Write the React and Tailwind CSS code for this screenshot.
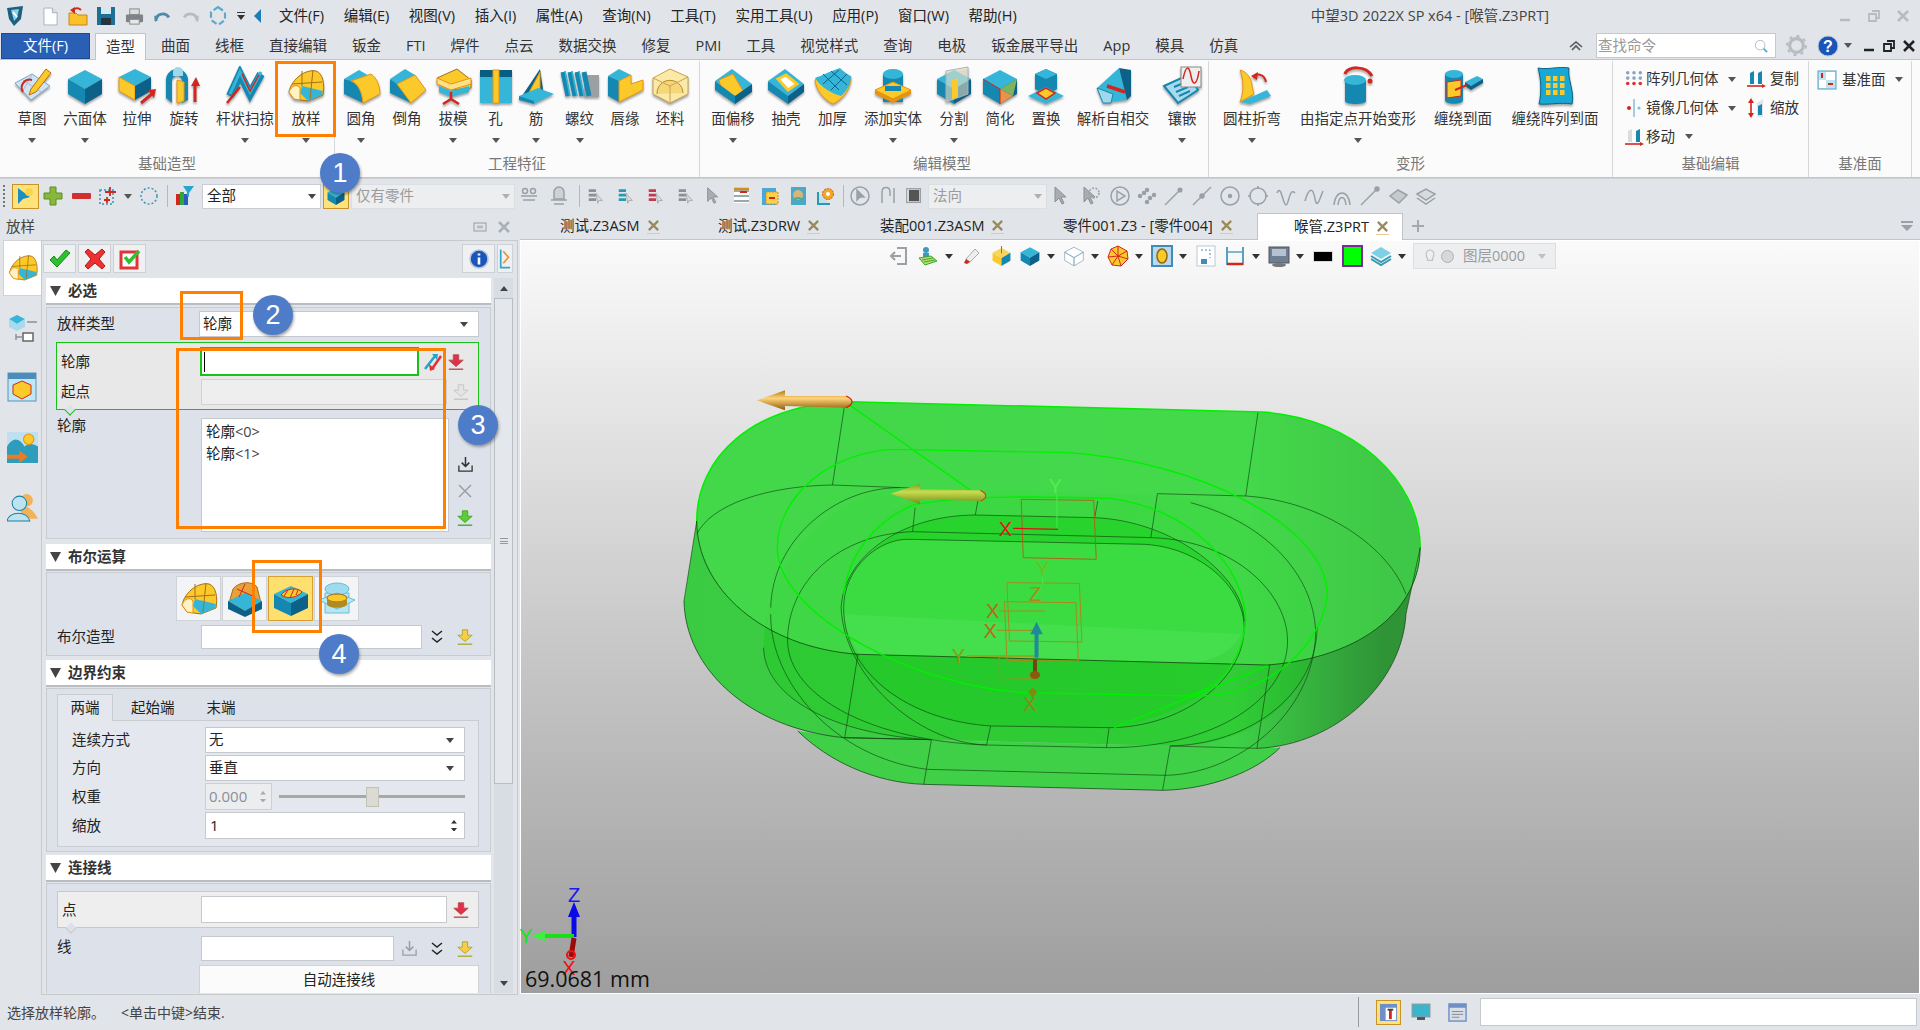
import React from 'react';

const T = '#35b6d8', L = '#1488b0', R = '#0b6187', Y = '#fcc92b', O = '#e8930f', RD = '#d0281e';

const Ico = ({ s = 40, c = '', children }) => (
  <svg viewBox="0 0 40 40" width={s} height={s} className={c}>{children}</svg>
);

const cube = (
  <>
    <path d="M20 4 37 13 20 23 3 13Z" fill={T} />
    <path d="M3 13 20 23V38L3 28Z" fill={L} />
    <path d="M37 13 20 23V38L37 28Z" fill={R} />
  </>
);

// ribbon pictures, all on a 40 x 40 box
const pics = {
  sketch: (
    <>
      <path d="M3 17 20 8 38 20 19 34Z" fill="#cfe3f2" stroke="#7aa8c8" />
      <path d="M11 14 29 26M20 9 10 26" stroke="#9cc0da" />
      <path d="M11 26a8 8 0 0 1 9-12" stroke={RD} strokeWidth="2" fill="none" />
      <path d="M19 23 34 3 39 7 24 26 17 29Z" fill={Y} stroke="#b56d10" />
    </>
  ),
  hex: cube,
  extrude: (
    <>
      <path d="M18 3 34 11 18 20 2 11Z" fill={T} />
      <path d="M2 11 18 20V34L2 25Z" fill={Y} stroke={O} />
      <path d="M34 11 18 20V34L34 25Z" fill={R} />
      <path d="M24 37 36 27" stroke={RD} strokeWidth="3" />
      <path d="M31 24 39 23 37 32Z" fill={RD} />
    </>
  ),
  revolve: (
    <>
      <path d="M2 32V14a11 11 0 0 1 22 0V34l-6 3V15a5 5 0 0 0-10 0V37Z" fill={L} />
      <path d="M9 6a5 5 0 0 1 10 0v4H9Z" fill="#9fd8ea" />
      <path d="M13 14 20 16V35L13 37Z" fill={Y} stroke={O} />
      <path d="M31 36V18" stroke={RD} strokeWidth="3" />
      <path d="M27 20 32 11 36 20Z" fill={RD} />
    </>
  ),
  sweep: (
    <>
      <path d="M5 30 15 8 25 28 36 8" stroke={L} strokeWidth="8" fill="none" />
      <path d="M5 28 15 6 25 26 36 6" stroke={T} strokeWidth="3" fill="none" />
      <path d="M2 37 15 21" stroke={RD} strokeWidth="2.5" />
      <path d="M17 8 25 25 34 9" stroke={RD} strokeWidth="1.5" fill="none" />
    </>
  ),
  loft: (
    <>
      <path d="M3 26C6 12 20 3 30 5c7 2 9 14 7 24L22 35 8 33Z" fill={Y} stroke="#a66f14" />
      <path d="M16 20 37 25 36 29 22 35 14 27Z" fill={T} />
      <path d="M16 5 16 20M27 4 24 33M6 18 36 16" stroke="#a66f14" fill="none" />
      <path d="M3 26C6 19 11 18 14 22L14 34 8 33Z" fill="#fff3c4" stroke={O} />
    </>
  ),
  fillet: (
    <>
      <path d="M18 4 30 11 10 15 3 13Z" fill={T} />
      <path d="M3 13 10 15C18 18 21 27 22 37L3 28Z" fill={L} />
      <path d="M10 15 30 8C36 12 39 20 39 28L22 37C21 27 18 18 10 15Z" fill={Y} stroke={O} />
    </>
  ),
  chamfer: (
    <>
      <path d="M18 3 28 9 10 18 3 13Z" fill={T} />
      <path d="M3 13 10 18 24 37 3 27Z" fill={L} />
      <path d="M10 18 28 9 39 24 24 37Z" fill={Y} stroke={O} />
    </>
  ),
  draft: (
    <>
      <path d="M4 12 24 3 38 14 38 22 18 24Z" fill={Y} stroke="#a66f14" />
      <path d="M4 12 18 18 38 12 38 18 18 24 4 18Z" fill="#fde187" stroke={O} />
      <path d="M6 20 18 25 36 20V26L18 31 6 26Z" fill={T} />
      <path d="M18 26V33L10 38M18 33 26 38" stroke={RD} strokeWidth="2.5" fill="none" />
    </>
  ),
  hole: (
    <>
      <rect x="4" y="4" width="32" height="33" fill={T} />
      <rect x="4" y="4" width="32" height="7" fill="#0a5d82" />
      <rect x="17" y="4" width="6" height="33" fill={Y} stroke={O} />
    </>
  ),
  rib: (
    <>
      <path d="M6 30 24 3 28 30Z" fill={R} />
      <path d="M10 32 24 6V30Z" fill={Y} stroke={O} />
      <path d="M3 30 22 22 38 28 18 38Z" fill={T} />
      <path d="M3 30V34L18 38V35Z" fill={L} />
    </>
  ),
  thread: (
    <>
      <rect x="24" y="9" width="15" height="22" fill="#9aa0a3" />
      <path d="M3 6 8 30M10 6 15 30M17 6 22 30M24 6 29 30" stroke={L} strokeWidth="5" />
      <path d="M5 5 10 30M12 5 17 30M19 5 24 30" stroke={T} strokeWidth="1.5" />
    </>
  ),
  lip: (
    <>
      <path d="M14 3 26 9 14 15 3 10Z" fill={T} />
      <path d="M3 10 14 15V36L3 30Z" fill={L} />
      <path d="M14 15 26 9V18L38 14V24L14 36Z" fill={Y} stroke={O} />
    </>
  ),
  stock: (
    <>
      <path d="M20 3 38 11V28L20 37 3 28V12Z" fill="#fbe9a8" stroke="#c9a24a" />
      <path d="M7 28C7 10 32 10 33 27" stroke="#b78a2c" fill="#f5d77a" />
      <path d="M3 12 20 20 38 11M20 20V37" stroke="#c9a24a" fill="none" />
    </>
  ),
  offset: (
    <>
      <path d="M19 3 39 18 22 30 2 15Z" fill={T} />
      <path d="M6 14 20 8 33 30 10 30Z" fill={Y} stroke={O} />
      <path d="M2 15 22 30V38L2 24Z" fill={L} />
      <path d="M39 18 22 30V38L39 26Z" fill={R} />
    </>
  ),
  shell: (
    <>
      <path d="M19 3 38 18 22 30 2 15Z" fill={T} />
      <path d="M12 13 20 9 31 18 22 24Z" fill="#fff" stroke={Y} strokeWidth="3" />
      <path d="M2 15 22 30V38L2 24Z" fill={L} />
      <path d="M38 18 22 30V38L38 26Z" fill={R} />
    </>
  ),
  thick: (
    <>
      <path d="M2 14C8 12 20 6 27 3c3 3 8 7 11 8 0 12-8 22-18 27C10 33 3 24 2 14Z" fill={Y} stroke={O} />
      <path d="M2 12C8 10 20 4 27 2c3 3 8 7 11 8 0 8-4 15-10 20-8-2-20-8-26-18Z" fill={T} />
      <path d="M10 8 26 24M18 5 34 19M10 18 26 4M18 24 34 8" stroke={R} fill="none" />
    </>
  ),
  add: (
    <>
      <path d="M10 8V36H30V8Z" fill={L} />
      <ellipse cx="20" cy="8" rx="10" ry="5" fill={T} />
      <path d="M2 24 20 16 38 24 20 33Z" fill={Y} stroke={O} />
      <path d="M2 24V28L20 37V33ZM38 24V28L20 37V33Z" fill={O} />
      <rect x="12" y="20" width="16" height="5" fill={L} />
    </>
  ),
  split: (
    <>
      {cube}
      <path d="M12 5 34 1V28L12 36Z" fill="#f2e6c6" fillOpacity=".55" stroke="#a9b2b8" />
      <path d="M18 14 24 12V31L18 34Z" fill={Y} />
    </>
  ),
  simplify: (
    <>
      {cube}
      <path d="M20 23 37 13 33 30Z" fill="#7db35f" />
      <path d="M20 23V38L33 30Z" fill="#e8934a" />
      <path d="M3 13 20 23V38" stroke={RD} fill="none" />
    </>
  ),
  replace: (
    <>
      <path d="M9 8 20 3 31 8V23L20 29 9 23Z" fill={L} />
      <path d="M9 8 20 13 31 8 20 3Z" fill={T} />
      <path d="M2 30 20 21 38 30 20 38Z" fill={T} />
      <path d="M11 27 20 22 29 27 20 33Z" fill={Y} stroke={RD} strokeWidth="1.5" />
    </>
  ),
  intersect: (
    <>
      <path d="M4 22 26 2 34 34 10 37Z" fill={T} />
      <path d="M26 2 38 4V30L34 34Z" fill={R} />
      <path d="M4 22 20 28 18 37 10 37Z" fill="#9ed8ea" stroke={L} />
      <path d="M14 20 32 26" stroke={RD} strokeWidth="3.5" />
    </>
  ),
  inlay: (
    <>
      <path d="M2 20 26 9 36 24 16 37Z" fill="#a9d9ec" stroke={L} strokeWidth="2" />
      <path d="M12 21 24 16M14 26 26 21M17 30 28 25" stroke={L} strokeWidth="2" />
      <rect x="19" y="1" width="20" height="20" fill="#eee" stroke="#888" />
      <path d="M21 13c3-14 6-14 8-3s6 9 8-5" stroke={RD} strokeWidth="1.5" fill="none" />
    </>
  ),
  bend: (
    <>
      <path d="M8 36 35 24 39 30 18 38Z" fill={T} />
      <path d="M8 4c8 2 12 10 12 16l2 8-14 8c4-10 4-22 0-32Z" fill={Y} stroke={O} />
      <path d="M22 12c2-5 10-5 12 4" stroke={RD} strokeWidth="2" fill="none" />
      <path d="M19 10 26 6 25 14Z" fill={RD} />
    </>
  ),
  deform: (
    <>
      <path d="M7 14V35C7 39 28 39 28 35V14Z" fill={L} />
      <ellipse cx="17" cy="14" rx="11" ry="5" fill={T} />
      <path d="M7 8C9 0 28-1 34 10" stroke={RD} strokeWidth="3" fill="none" />
      <circle cx="32" cy="15" r="2.5" fill={RD} />
    </>
  ),
  wrap: (
    <>
      <path d="M2 8V34C2 39 20 39 20 34V8Z" fill={L} />
      <ellipse cx="11" cy="8" rx="9" ry="4" fill={T} />
      <path d="M4 16 18 14V30L4 32Z" fill={Y} stroke={RD} />
      <path d="M22 16 34 10 40 13 28 20Z" fill={T} />
      <path d="M22 16V20L28 24V20ZM40 13V17L28 24V20Z" fill={R} />
      <path d="M12 24 24 19" stroke={RD} strokeWidth="2" />
    </>
  ),
  wrapArr: (
    <>
      <path d="M3 2C14 4 24 0 34 2c-2 10 6 24 3 36-12-2-22 1-33 0C7 26 6 12 3 2Z" fill="#18a8d6" stroke={R} />
      {[10, 17, 24].map((y) => [11, 18, 25].map((x) => <rect key={x + '-' + y} x={x} y={y} width="4.5" height="5" fill={Y} />))}
    </>
  ),
  boolAdd: (
    <>
      <path d="M8 10C14 2 28 2 32 8L36 24 20 32 4 24Z" fill="#e9a03a" stroke="#a66f14" />
      <path d="M3 22 20 14 37 22 20 32Z" fill={T} />
      <path d="M3 22V30L20 38V32ZM37 22V30L20 38V32Z" fill={R} />
      <path d="M12 10 30 18M20 5 14 18" stroke={RD} fill="none" />
    </>
  ),
  boolSub: (
    <>
      <path d="M3 15 20 7 37 15 20 24Z" fill={T} />
      <path d="M3 15 20 24V37L3 29Z" fill={L} />
      <path d="M37 15 20 24V37L37 29Z" fill={R} />
      <path d="M10 16C15 9 27 8 31 13 27 18 17 21 10 16Z" fill={Y} stroke={RD} />
      <path d="M13 17 17 11M19 19 23 10M25 16 27 11" stroke={RD} fill="none" />
    </>
  ),
  boolCross: (
    <>
      <path d="M8 14V34H32V14Z" fill="#b7e6f2" stroke="#69bcd4" />
      <ellipse cx="20" cy="10" rx="12" ry="6" fill="#9ddcee" stroke="#69bcd4" />
      <path d="M2 21 20 14 38 21 20 30Z" fill="#bde8f3" stroke="#69bcd4" />
      <ellipse cx="20" cy="19" rx="10" ry="4" fill={Y} stroke="#9a6a10" />
      <path d="M10 19V25C10 30 30 30 30 25V19C30 24 10 24 10 19Z" fill="#b08c20" />
    </>
  ),
};

const RArrow = ({ c = '#555', w = 8 }) => (
  <svg viewBox="0 0 8 5" width={w} height={(w * 5) / 8} className="shrink-0"><path d="M0 0H8L4 5Z" fill={c} /></svg>
);

const items1 = [
  ['w-[48px]', '草图', 'sketch', 1], ['w-[58px]', '六面体', 'hex', 1], ['w-[46px]', '拉伸', 'extrude', 0],
  ['w-[48px]', '旋转', 'revolve', 0], ['w-[74px]', '杆状扫掠', 'sweep', 1], ['w-[48px]', '放样', 'loft', 1],
];
const items2 = [
  ['w-[46px]', '圆角', 'fillet', 1], ['w-[46px]', '倒角', 'chamfer', 0], ['w-[46px]', '拔模', 'draft', 1],
  ['w-[39px]', '孔', 'hole', 1], ['w-[42px]', '筋', 'rib', 1], ['w-[45px]', '螺纹', 'thread', 1],
  ['w-[46px]', '唇缘', 'lip', 0], ['w-[44px]', '坯料', 'stock', 0],
];
const items3 = [
  ['w-[58px]', '面偏移', 'offset', 1], ['w-[48px]', '抽壳', 'shell', 0], ['w-[45px]', '加厚', 'thick', 0],
  ['w-[76px]', '添加实体', 'add', 1], ['w-[46px]', '分割', 'split', 1], ['w-[46px]', '简化', 'simplify', 0],
  ['w-[46px]', '置换', 'replace', 0], ['w-[88px]', '解析自相交', 'intersect', 0], ['w-[50px]', '镶嵌', 'inlay', 1],
];
const items4 = [
  ['w-[74px]', '圆柱折弯', 'bend', 1], ['w-[138px]', '由指定点开始变形', 'deform', 1],
  ['w-[72px]', '缠绕到面', 'wrap', 0], ['w-[112px]', '缠绕阵列到面', 'wrapArr', 0],
];

const RibbonItem = ({ item }) => (
  <div className={`${item[0]} flex flex-col items-center shrink-0`}>
    <div className="h-[42px] flex items-center justify-center"><Ico c="drop-shadow-[0_2px_1px_rgba(0,0,0,0.35)]">{pics[item[2]]}</Ico></div>
    <div className="h-[23px] leading-[23px] whitespace-nowrap">{item[1]}</div>
    <div className="h-[20px] flex items-center justify-center">{item[3] ? <RArrow /> : null}</div>
  </div>
);

const RibbonGroup = ({ w, pl, title, items, children, capCls = '' }) => (
  <div className={`${w} h-[116px] shrink-0 border-r border-[#d5d8db] flex flex-col`}>
    <div className={`${pl} h-[90px] pt-[4px] flex`}>
      {items ? items.map((it) => <RibbonItem key={it[1]} item={it} />) : children}
    </div>
    <div className={`${capCls} flex-1 flex items-center justify-center text-[#777] text-[14.5px]`}>{title}</div>
  </div>
);

const ColorDots = () => (
  <svg viewBox="0 0 20 20" width="18" height="18">
    {[3, 9, 15].map((y) => [3, 10, 17].map((x) => <circle key={x + '' + y} cx={x} cy={y} r="2" fill={y === 15 ? '#d33' : '#88a6c4'} />))}
  </svg>
);

const Mini = ({ kind }) => {
  if (kind === 'copy' || kind === 'move') {
    return (
      <svg viewBox="0 0 20 20" width="20" height="20">
        <path d="M4 4 8 2V15H4Z" fill={kind === 'copy' ? L : '#d8dcdf'} />
        <path d="M12 4 16 2V15H12Z" fill={L} />
        <path d="M1 17H17" stroke={RD} strokeWidth="1.6" />
        <path d="M16 15 20 17 16 19Z" fill={RD} />
      </svg>
    );
  }
  if (kind === 'mirror') {
    return (
      <svg viewBox="0 0 20 20" width="20" height="20">
        <path d="M10 1V19" stroke="#7cc0d8" strokeWidth="1.5" />
        <circle cx="5" cy="10" r="2" fill={RD} />
        <circle cx="15" cy="10" r="1.6" fill="#7cc0d8" />
      </svg>
    );
  }
  if (kind === 'scale') {
    return (
      <svg viewBox="0 0 20 20" width="20" height="20">
        <path d="M5 2V18" stroke={RD} strokeWidth="1.6" />
        <path d="M2 5 5 0 8 5ZM2 15 5 20 8 15Z" fill={RD} />
        <path d="M11 5 17 1V19H11Z" fill="#e0e4e7" />
        <path d="M12 8 16 6V17H12Z" fill={L} />
      </svg>
    );
  }
  if (kind === 'datum') {
    return (
      <svg viewBox="0 0 20 20" width="20" height="20">
        <rect x="1" y="1" width="18" height="18" fill="#bfe3f0" stroke="#4fa3c4" />
        <rect x="9" y="2" width="9" height="8" fill="#fff" />
        <rect x="2" y="10" width="7" height="8" fill="#fff" />
        <path d="M5 3V8M11 14H16" stroke={RD} strokeWidth="2" />
      </svg>
    );
  }
  return <ColorDots />;
};

const Rows = () => (
  <div className="flex flex-col w-full pl-[8px] text-[14.5px]">
    <div className="flex h-[29px] items-center">
      <span className="w-[25px] flex justify-center"><Mini kind="dots" /></span>
      <span className="w-[73px] whitespace-nowrap">阵列几何体</span>
      <span className="w-[27px] pl-[9px]"><RArrow /></span>
      <span className="w-[24px]"><Mini kind="copy" /></span>
      <span className="whitespace-nowrap">复制</span>
    </div>
    <div className="flex h-[29px] items-center">
      <span className="w-[25px] flex justify-center"><Mini kind="mirror" /></span>
      <span className="w-[73px] whitespace-nowrap">镜像几何体</span>
      <span className="w-[27px] pl-[9px]"><RArrow /></span>
      <span className="w-[24px]"><Mini kind="scale" /></span>
      <span className="whitespace-nowrap">缩放</span>
    </div>
    <div className="flex h-[29px] items-center">
      <span className="w-[25px] flex justify-center"><Mini kind="move" /></span>
      <span className="w-[39px] whitespace-nowrap">移动</span>
      <RArrow />
    </div>
  </div>
);

const Win = ({ k, c = '#b8bcc0' }) => (
  <svg viewBox="0 0 14 14" width="14" height="14" className="shrink-0">
    {k === 'min' && <path d="M2 11H12" stroke={c} strokeWidth="2.5" />}
    {k === 'max' && <path d="M5 2H12V9H9M2 5H9V12H2Z" stroke={c} strokeWidth="1.8" fill="none" />}
    {k === 'x' && <path d="M2 2 12 12M12 2 2 12" stroke={c} strokeWidth="2.5" />}
  </svg>
);

const QuickIcons = () => (
  <div className="flex items-center pl-[1px] shrink-0">
    <span className="w-[28px] flex justify-center">
      <svg viewBox="0 0 20 22" width="20" height="22">
        <path d="M2 3 18 1 16 14 9 21 4 14Z" fill="#1c5f7e" />
        <path d="M6 5 14 4 12 13 9 16Z" fill="#8ad0e2" />
        <path d="M8 7 12 12" stroke="#fff" strokeWidth="2" />
      </svg>
    </span>
    <span className="w-[28px] flex justify-center ml-[7px]">
      <svg viewBox="0 0 16 20" width="15" height="19"><path d="M1 1H10L15 6V19H1Z" fill="#fff" stroke="#a8b0b8" /><path d="M10 1V6H15" fill="#dde" stroke="#a8b0b8" /></svg>
    </span>
    <span className="w-[28px] flex justify-center">
      <svg viewBox="0 0 20 20" width="20" height="20"><path d="M1 7H8L10 9H19V19H1Z" fill="#f9c12a" stroke="#c8861a" /><path d="M5 6C5 2 10 1 13 4" stroke={RD} strokeWidth="2" fill="none" /><path d="M2 4 7 1 7 8Z" fill={RD} /></svg>
    </span>
    <span className="w-[28px] flex justify-center">
      <svg viewBox="0 0 20 20" width="20" height="20"><rect x="1" y="1" width="18" height="18" fill="#1d6f95" /><rect x="5" y="1" width="10" height="7" fill="#d8e8f0" /><rect x="5" y="12" width="10" height="7" fill="#26353d" /></svg>
    </span>
    <span className="w-[28px] flex justify-center">
      <svg viewBox="0 0 20 20" width="19" height="19"><rect x="5" y="2" width="10" height="6" fill="#ddd" stroke="#888" /><rect x="1" y="8" width="18" height="8" rx="1" fill="#7d8388" /><rect x="5" y="13" width="10" height="5" fill="#e8e8e8" stroke="#888" /></svg>
    </span>
    <span className="w-[28px] flex justify-center">
      <svg viewBox="0 0 20 14" width="19" height="13"><path d="M3 12C2 5 12 1 17 8" stroke="#4d8cab" strokeWidth="3" fill="none" /><path d="M1 6 6 8 2 13Z" fill="#4d8cab" /></svg>
    </span>
    <span className="w-[28px] flex justify-center">
      <svg viewBox="0 0 20 14" width="19" height="13"><path d="M17 12C18 5 8 1 3 8" stroke="#b8bcc0" strokeWidth="3" fill="none" /><path d="M19 6 14 8 18 13Z" fill="#b8bcc0" /></svg>
    </span>
    <span className="w-[28px] flex justify-center">
      <svg viewBox="0 0 20 22" width="20" height="22"><path d="M10 2 17 7V15L10 20 3 15V7Z" fill="none" stroke="#5aaac8" strokeWidth="2.2" strokeDasharray="6 3" /></svg>
    </span>
    <span className="w-[12px] ml-[3px] flex flex-col items-center gap-[2px]"><span className="w-[8px] h-[1px] bg-[#333]" /><RArrow c="#333" /></span>
    <span className="w-[10px] ml-[7px] flex">
      <svg viewBox="0 0 8 14" width="8" height="14"><path d="M7 0V14L0 7Z" fill="#1a7db5" /></svg>
    </span>
  </div>
);

const menus = ['文件(F)', '编辑(E)', '视图(V)', '插入(I)', '属性(A)', '查询(N)', '工具(T)', '实用工具(U)', '应用(P)', '窗口(W)', '帮助(H)'];
const tabs = ['曲面', '线框', '直接编辑', '钣金', 'FTI', '焊件', '点云', '数据交换', '修复', 'PMI', '工具', '视觉样式', '查询', '电极', '钣金展平导出', 'App', '模具', '仿真'];

const Gray = ({ children, s = 22 }) => (
  <svg viewBox="0 0 22 22" width={s} height={s} className="shrink-0" fill="none" stroke="#9aa0a5" strokeWidth="1.5">{children}</svg>
);

const Cur = () => <path d="M4 2 4 17 8 13 11 19 13 18 10 12 15 12Z" fill="#a9adb1" stroke="#8b9094" strokeWidth="1" />;

const Toolbar = () => (
  <div className="h-[35px] flex items-center bg-[#e1e5e9] shrink-0 border-t border-[#cfd2d6] relative">
    <span className="w-[2px] h-[22px] ml-[3px] border-l-2 border-dotted border-[#777]" />
    <span className="w-[27px] h-[25px] ml-[7px] bg-[#ffe27a] border border-[#c9932c] flex items-center justify-center">
      <svg viewBox="0 0 20 20" width="20" height="20"><path d="M2 2V18L7 13 14 11Z" fill="#1a8fc0" /><circle cx="13" cy="6" r="4" fill="#fbd34a" /></svg>
    </span>
    <span className="w-[28px] ml-[0px] flex justify-center">
      <svg viewBox="0 0 20 20" width="20" height="20"><path d="M7 1H13V7H19V13H13V19H7V13H1V7H7Z" fill="#86b83c" stroke="#5e8d25" /></svg>
    </span>
    <span className="w-[28px] flex justify-center"><span className="w-[19px] h-[6px] rounded-[1px] bg-[#d42f2f]" /></span>
    <span className="w-[26px] flex justify-center">
      <svg viewBox="0 0 20 20" width="20" height="20"><rect x="2" y="4" width="13" height="14" fill="none" stroke="#3a92b8" strokeDasharray="2 2" strokeWidth="1.5" /><path d="M12 1V10M7 6H18M6 14H12M9 11V17" stroke={RD} strokeWidth="1.8" /></svg>
    </span>
    <span className="w-[14px] flex justify-center"><RArrow /></span>
    <span className="w-[28px] flex justify-center">
      <svg viewBox="0 0 20 20" width="20" height="20"><circle cx="10" cy="10" r="8" fill="none" stroke="#3a92b8" strokeDasharray="2 2" strokeWidth="1.5" /></svg>
    </span>
    <span className="w-[1px] h-[22px] bg-[#b5b8bc] ml-[4px]" />
    <span className="w-[22px] ml-[5px] flex justify-center">
      <svg viewBox="0 0 20 20" width="20" height="20"><rect x="2" y="8" width="4" height="11" fill={RD} /><rect x="6" y="6" width="4" height="13" fill="#2da83a" /><rect x="10" y="8" width="4" height="11" fill="#2a5bb8" /><path d="M9 0H20L15 7V11L13 10V6Z" fill="#28a6cf" /></svg>
    </span>
    <div className="w-[119px] h-[25px] ml-[7px] bg-white border border-[#c9ccd0] flex items-center justify-between px-[4px] text-[14.5px] text-[#222]">
      <span>全部</span><RArrow c="#444" />
    </div>
    <span className="w-[26px] h-[25px] ml-[2px] bg-[#ffe27a] border border-[#c9932c] flex items-center justify-center overflow-hidden">
      <Ico s={20}>{cube}</Ico>
    </span>
    <div className="w-[164px] h-[25px] ml-[2px] bg-[#eceef0] border border-[#dcdfe2] flex items-center justify-between px-[4px] text-[14.5px] text-[#9b9b9b]">
      <span>仅有零件</span><RArrow c="#b0b0b0" />
    </div>
    <span className="w-[28px] ml-[0px] flex justify-center"><Gray><circle cx="7" cy="6" r="2.5" /><circle cx="15" cy="6" r="2.5" /><path d="M3 11H19M5 15H17" /></Gray></span>
    <span className="w-[32px] flex justify-center"><Gray><path d="M6 14V7a5 5 0 0 1 10 0V14Z" fill="#cfd2d5" /><path d="M3 15H19M6 19H16" /></Gray></span>
    <span className="w-[1px] h-[22px] bg-[#b5b8bc] ml-[4px]" />
    {[0, 1, 2, 3].map((i) => (
      <span key={i} className="w-[28px] ml-[2px] flex justify-center">
        <Gray s={20}>
          <path d="M3 5H11M3 10H11M3 15H11" stroke={i === 1 ? '#2a9ab0' : i === 2 ? '#c23a4a' : '#8b9094'} strokeWidth="3" />
          <path d="M11 8 18 16 14 16 13 19Z" fill="#ddd" stroke="#aaa" strokeWidth="1" />
        </Gray>
      </span>
    ))}
    <span className="w-[28px] flex justify-center"><Gray s={20}><Cur /></Gray></span>
    <span className="w-[28px] flex justify-center">
      <svg viewBox="0 0 20 20" width="20" height="20"><path d="M2 3H17V17H2Z" fill="#fff" /><path d="M2 5H17M2 10H17M2 15H17" stroke="#9aa" strokeWidth="2" /><path d="M2 3H17" stroke="#d88a1a" strokeWidth="2.5" /><path d="M8 6H15" stroke={RD} strokeWidth="2" /></svg>
    </span>
    <span className="w-[28px] flex justify-center">
      <svg viewBox="0 0 20 20" width="20" height="20"><rect x="2" y="2" width="14" height="17" fill="#4aa8d8" /><rect x="6" y="6" width="12" height="12" fill="#fbd34a" stroke="#d8881a" strokeDasharray="2 1" /><path d="M9 12H15" stroke={RD} strokeWidth="2" /></svg>
    </span>
    <span className="w-[28px] flex justify-center">
      <svg viewBox="0 0 20 20" width="20" height="20"><rect x="3" y="1" width="15" height="18" fill="#4aa8c8" /><circle cx="10" cy="9" r="5" fill="#d8b478" /><path d="M5 15C8 11 12 11 15 15" stroke="#5a8" strokeWidth="2" fill="none" /></svg>
    </span>
    <span className="w-[28px] flex justify-center">
      <svg viewBox="0 0 20 20" width="20" height="20"><path d="M2 6V18H14" fill="#bfe3f0" stroke="#2a9ab0" strokeWidth="2" /><circle cx="12" cy="8" r="5.5" fill="#f5a623" stroke="#c45a1a" strokeDasharray="2 1" /><circle cx="12" cy="8" r="2" fill="#fff" /></svg>
    </span>
    <span className="w-[1px] h-[22px] bg-[#b5b8bc] ml-[3px]" />
    <span className="w-[31px] flex justify-center"><Gray><circle cx="11" cy="11" r="9" /><path d="M8 5 8 15 11 12 15 12Z" fill="#9aa0a5" /></Gray></span>
    <span className="w-[26px] flex justify-center"><Gray><path d="M5 18V7C5 1 13 1 13 7V11M17 3V18" /></Gray></span>
    <span className="w-[25px] flex justify-center"><Gray s={20}><rect x="3" y="3" width="15" height="15" fill="#fff" /><rect x="6" y="5" width="10" height="11" fill="#555" stroke="#555" /></Gray></span>
    <div className="w-[119px] h-[25px] ml-[2px] bg-[#eceef0] border border-[#dcdfe2] flex items-center justify-between px-[4px] text-[14.5px] text-[#9b9b9b]">
      <span>法向</span><RArrow c="#b0b0b0" />
    </div>
    <span className="w-[28px] ml-[1px] flex justify-center"><Gray><Cur /></Gray></span>
    <span className="w-[30px] flex justify-center"><Gray><Cur /><circle cx="14" cy="8" r="5" strokeDasharray="2 1.5" /></Gray></span>
    <span className="w-[27px] flex justify-center"><Gray><circle cx="11" cy="11" r="9" /><path d="M8 6V16L16 11Z" /></Gray></span>
    <span className="w-[27px] flex justify-center"><Gray><circle cx="4" cy="11" r="1.5" fill="#9aa0a5" /><circle cx="11" cy="5" r="1.5" fill="#9aa0a5" /><circle cx="11" cy="17" r="1.5" fill="#9aa0a5" /><circle cx="18" cy="10" r="1.5" fill="#9aa0a5" /><circle cx="8" cy="8" r="1.5" fill="#9aa0a5" /><circle cx="14" cy="13" r="1.5" fill="#9aa0a5" /></Gray></span>
    <span className="w-[28px] flex justify-center"><Gray><path d="M2 20 16 6" /><circle cx="17" cy="5" r="1.8" fill="#9aa0a5" /></Gray></span>
    <span className="w-[28px] flex justify-center"><Gray><path d="M2 20 20 2" /><circle cx="11" cy="11" r="2" fill="#9aa0a5" /></Gray></span>
    <span className="w-[28px] flex justify-center"><Gray><circle cx="11" cy="11" r="9" /><circle cx="11" cy="11" r="1.5" fill="#9aa0a5" /></Gray></span>
    <span className="w-[28px] flex justify-center"><Gray><circle cx="11" cy="11" r="8" /><path d="M11 1V4M11 18V21M1 11H4M18 11H21" /></Gray></span>
    <span className="w-[28px] flex justify-center"><Gray><path d="M2 8C6-2 8 20 11 20S14 2 20 8" /></Gray></span>
    <span className="w-[28px] flex justify-center"><Gray><path d="M2 16C6 2 10 2 12 14S18 10 20 6" /></Gray></span>
    <span className="w-[28px] flex justify-center"><Gray><path d="M3 20C4 4 18 4 19 20M7 20C8 10 14 10 15 20" /></Gray></span>
    <span className="w-[28px] flex justify-center"><Gray><path d="M2 20 18 4" /><circle cx="18" cy="4" r="2" fill="#9aa0a5" /></Gray></span>
    <span className="w-[28px] flex justify-center"><Gray><path d="M3 11 11 5 20 10 12 18Z" fill="#c6cacd" /></Gray></span>
    <span className="w-[28px] flex justify-center"><Gray><path d="M2 9 11 4 20 9 11 15Z" fill="#d8dbde" /><path d="M2 13 11 19 20 13" /></Gray></span>
  </div>
);

const Sec = ({ title }) => (
  <div className="h-[27px] bg-white border-b-2 border-[#b9bdc2] flex items-center pl-[4px] shrink-0">
    <svg viewBox="0 0 10 10" width="11" height="11"><path d="M0 1H10L5 10Z" fill="#444" /></svg>
    <span className="ml-[7px] font-bold text-[14.5px] text-[#333]">{title}</span>
  </div>
);

const Select = ({ w, text }) => (
  <div className={`${w} h-[26px] bg-white border border-[#c5c8cc] flex items-center justify-between pl-[3px] pr-[10px]`}>
    <span>{text}</span><RArrow c="#444" />
  </div>
);

const DownArrow = ({ c = '#e0304a', line = '#b84a4a' }) => (
  <svg viewBox="0 0 20 20" width="18" height="18" className="shrink-0">
    <path d="M7 2H13V8H18L10 15 2 8H7Z" fill={c} stroke={line} />
    <path d="M2 18H18" stroke={line} strokeWidth="1.5" />
  </svg>
);

const Chevrons = () => (
  <svg viewBox="0 0 12 14" width="12" height="14" className="shrink-0"><path d="M1 1 6 5 11 1M1 8 6 12 11 8" fill="none" stroke="#222" strokeWidth="1.5" /></svg>
);

const TrayDown = ({ c = '#333' }) => (
  <svg viewBox="0 0 18 18" width="17" height="17" className="shrink-0"><path d="M9 1V10M5 7 9 11 13 7" fill="none" stroke={c} strokeWidth="1.6" /><path d="M2 10V16H16V10" fill="none" stroke={c} strokeWidth="1.4" /></svg>
);

const ToolBtn = ({ w, children }) => (
  <span className={`${w} h-[29px] bg-[#eef0f2] border border-[#cdd0d4] flex items-center justify-center`}>{children}</span>
);

const LeftPanel = () => (
  <div className="w-[520px] shrink-0 flex flex-col bg-[#e1e5e9] text-[14.5px] text-[#222]">
    <div className="h-[27px] flex items-center shrink-0">
      <span className="ml-[6px] text-[#444]">放样</span>
      <span className="ml-auto mr-[10px]"><svg viewBox="0 0 14 10" width="14" height="10"><rect x="1" y="1" width="12" height="8" fill="none" stroke="#999" /><rect x="4" y="3.5" width="6" height="3" fill="#bbb" /></svg></span>
      <span className="mr-[9px]"><Win k="x" c="#aab0b5" /></span>
    </div>
    <div className="flex-1 min-h-0 flex pl-[3px]">
      <div className="w-[38px] shrink-0 flex flex-col items-center pb-[10px]">
        <div className="w-[38px] h-[56px] bg-white border border-[#cfd2d6] border-r-0 flex items-center justify-center"><Ico s={32}>{pics.loft}</Ico></div>
        <div className="mt-[16px]">
          <svg viewBox="0 0 30 30" width="30" height="30"><path d="M2 7 10 3 18 7 10 12Z" fill={T} /><path d="M2 7V15L10 19V12ZM18 7V15L10 19V12Z" fill="#a9d9ec" /><path d="M9 22V28M9 25H15M20 10H30" stroke="#8a9096" strokeWidth="1.5" /><rect x="16" y="21" width="10" height="8" fill="#fff" stroke="#666" strokeWidth="1.5" /></svg>
        </div>
        <div className="mt-[30px]">
          <svg viewBox="0 0 30 30" width="30" height="30"><rect x="1" y="1" width="28" height="28" fill="#bfe7f5" stroke="#5d93b5" /><rect x="1" y="1" width="28" height="6" fill="#4c8dbb" /><path d="M15 9 24 13V22L15 27 6 22V13Z" fill={Y} stroke={RD} /></svg>
        </div>
        <div className="mt-[30px]">
          <svg viewBox="0 0 30 30" width="31" height="31"><rect x="0" y="0" width="30" height="30" fill="#bfe0ee" /><path d="M0 30V14C6 4 12 6 17 14 22 10 26 12 30 14V30Z" fill="#2e9dbb" /><circle cx="21" cy="7" r="5" fill={Y} stroke={O} /><path d="M0 22H12V18L20 24 12 30V26H0Z" fill="#ee7a22" /></svg>
        </div>
        <div className="mt-[29px]">
          <svg viewBox="0 0 30 30" width="31" height="31"><circle cx="19" cy="8" r="6" fill="#f2b25a" /><path d="M12 16C16 12 24 14 30 26H16Z" fill="#f2b25a" /><circle cx="12" cy="11" r="7" fill="#bde3f0" stroke="#1f7fa3" /><path d="M0 28C2 18 20 18 22 28Z" fill="#bde3f0" stroke="#1f7fa3" /></svg>
        </div>
      </div>
      <div className="flex-1 min-w-0 border-t border-r border-b border-l border-[#c6cacd] flex flex-col relative z-0 -mb-[1px]">
        <div className="h-[37px] shrink-0 flex items-start pt-[3px] pl-[1px]">
          <ToolBtn w="w-[33px]">
            <svg viewBox="0 0 24 20" width="24" height="20"><path d="M2 11 9 18 22 4 18 1 9 11 6 7Z" fill="#2ec02e" stroke="#169016" /></svg>
          </ToolBtn>
          <span className="ml-[2px]"><ToolBtn w="w-[33px]">
            <svg viewBox="0 0 22 22" width="22" height="22"><path d="M4 1 11 7 18 1 21 4 15 11 21 18 18 21 11 15 4 21 1 18 7 11 1 4Z" fill="#ee3030" stroke="#b01818" /></svg>
          </ToolBtn></span>
          <span className="ml-[2px]"><ToolBtn w="w-[33px]">
            <svg viewBox="0 0 22 22" width="22" height="22"><path d="M2 4H18V20H2Z" fill="#fff" stroke="#e2323a" strokeWidth="3" /><path d="M6 9 10 14 20 3" stroke="#2ec02e" strokeWidth="3.5" fill="none" /></svg>
          </ToolBtn></span>
          <span className="ml-[316px]"><ToolBtn w="w-[33px]">
            <svg viewBox="0 0 20 20" width="20" height="20"><circle cx="10" cy="10" r="9" fill="#1a55b8" stroke="#b7c6dc" strokeWidth="1.5" /><path d="M10 4.5V6.5M10 8.5V15.5" stroke="#fff" strokeWidth="2.6" /></svg>
          </ToolBtn></span>
          <span className="ml-[2px]"><ToolBtn w="w-[16px]">
            <svg viewBox="0 0 14 24" width="12" height="22"><path d="M2 1V22H13" stroke="#35a4c6" strokeWidth="2" fill="none" /><path d="M5 3 11 10 5 17" stroke="#e8943a" strokeWidth="2" fill="none" /></svg>
          </ToolBtn></span>
        </div>
        <div className="flex-1 min-h-0 flex">
          <div className="w-[445px] ml-[4px] h-[715px] overflow-hidden shrink-0 flex flex-col">
            <Sec title="必选" />
            <div className="mt-[2px] h-[232px] shrink-0 bg-[#dde2ea] border border-[#c9cdd2] pt-[4px]">
              <div className="flex items-center pl-[10px] h-[24px]">
                <span className="w-[142px]">放样类型</span>
                <Select w="w-[280px]" text="轮廓" />
              </div>
              <div className="ml-[9px] mt-[6px] w-[423px] h-[68px] border border-[#19c219] bg-[#e8e8e8] relative">
                <div className="flex items-center h-[29px] mt-[4px] pl-[4px]">
                  <span className="w-[139px]">轮廓</span>
                  <div className="w-[219px] h-[29px] bg-white border-2 border-[#19c219] flex items-center pl-[2px]"><span className="w-[1px] h-[20px] bg-black" /></div>
                  <span className="w-[28px] flex justify-center">
                    <svg viewBox="0 0 20 20" width="20" height="20"><path d="M2 17 12 4" stroke="#26a4c8" strokeWidth="2.5" /><path d="M9 2H15L14 8Z" fill="#26a4c8" /><path d="M18 4 9 17" stroke="#e0303a" strokeWidth="2.5" /><path d="M6 12 7 19 12 17Z" fill="#e0303a" /></svg>
                  </span>
                  <DownArrow />
                </div>
                <div className="flex items-center h-[26px] mt-[3px] pl-[4px]">
                  <span className="w-[140px]">起点</span>
                  <div className="w-[246px] h-[26px] bg-[#eeeeee] border border-[#d0d2d4]" />
                  <span className="ml-[5px]"><DownArrow c="#e4e4e4" line="#c4c4c4" /></span>
                </div>
                <span className="absolute -bottom-[5px] left-[9px] w-[8px] h-[8px] rotate-45 bg-[#dde2ea] border-r border-b border-[#19c219]" />
              </div>
              <div className="flex pl-[10px] mt-[8px]">
                <span className="w-[144px] -mt-[3px]">轮廓</span>
                <div className="w-[248px] h-[114px] bg-white border border-[#c5c8cc] pl-[4px] pt-[2px] leading-[22px]">
                  <div>轮廓<span className="text-[#444]">&lt;0&gt;</span></div>
                  <div>轮廓<span className="text-[#444]">&lt;1&gt;</span></div>
                </div>
                <div className="w-[30px] flex flex-col items-center pt-[38px] gap-[10px] ml-[1px]">
                  <TrayDown />
                  <svg viewBox="0 0 16 16" width="16" height="16"><path d="M2 2 14 14M14 2 2 14" stroke="#9aa0a5" strokeWidth="1.5" /></svg>
                  <DownArrow c="#5ccc3a" line="#3ea824" />
                </div>
              </div>
            </div>
            <div className="mt-[5px]"><Sec title="布尔运算" /></div>
            <div className="mt-[1px] h-[84px] shrink-0 bg-[#dde2ea] border border-[#c9cdd2]">
              <div className="flex ml-[129px] mt-[3px] gap-[1px]">
                {['loft', 'boolAdd', 'boolSub', 'boolCross'].map((k) => (
                  <span key={k} className={`w-[45px] h-[45px] flex items-center justify-center border ${k === 'boolSub' ? 'bg-[#ffdf6e] border-[#d8a030]' : 'bg-[#f2f4f6] border-[#cfd2d6]'}`}><Ico s={40}>{pics[k]}</Ico></span>
                ))}
              </div>
              <div className="flex items-center pl-[10px] mt-[4px]">
                <span className="w-[144px]">布尔造型</span>
                <div className="w-[221px] h-[24px] bg-white border border-[#c5c8cc]" />
                <span className="w-[28px] ml-[1px] flex justify-center"><Chevrons /></span>
                <span className="w-[28px] flex justify-center"><DownArrow c="#f8cc44" line="#a8a830" /></span>
              </div>
            </div>
            <div className="mt-[4px]"><Sec title="边界约束" /></div>
            <div className="mt-[1px] h-[164px] shrink-0 bg-[#dde2ea] border border-[#c9cdd2] pt-[4px]">
              <div className="flex ml-[10px] h-[27px] items-center relative top-[1px]">
                <span className="w-[56px] h-[27px] bg-[#e4e8ee] border border-[#c9cdd2] border-b-0 flex items-center justify-center z-10">两端</span>
                <span className="ml-[18px]">起始端</span>
                <span className="ml-[32px]">末端</span>
              </div>
              <div className="ml-[10px] w-[422px] h-[127px] border border-[#c9cdd2] bg-[#e4e8ee] pt-[6px] pl-[14px]">
                <div className="flex items-center h-[26px]">
                  <span className="w-[133px]">连续方式</span>
                  <Select w="w-[260px]" text="无" />
                </div>
                <div className="flex items-center h-[26px] mt-[2px]">
                  <span className="w-[133px]">方向</span>
                  <Select w="w-[260px]" text="垂直" />
                </div>
                <div className="flex items-center h-[27px] mt-[2px]">
                  <span className="w-[133px]">权重</span>
                  <div className="w-[67px] h-[27px] bg-[#ecedee] border border-[#cdd0d3] flex items-center justify-between pl-[3px] pr-[5px] text-[#8a8f98]">
                    <span className="text-[15px]">0.000</span>
                    <span className="flex flex-col gap-[4px]"><span className="rotate-180 block"><RArrow c="#aaa" w={6} /></span><RArrow c="#aaa" w={6} /></span>
                  </div>
                  <div className="w-[186px] ml-[7px] h-[20px] relative flex items-center">
                    <div className="w-full h-[3px] bg-[#a9a9a4]" />
                    <div className="absolute left-[87px] top-0 w-[13px] h-[20px] bg-[#dcdbd3] border border-[#c2c1b8]" />
                  </div>
                </div>
                <div className="flex items-center h-[27px] mt-[2px]">
                  <span className="w-[133px]">缩放</span>
                  <div className="w-[260px] h-[27px] bg-white border border-[#c5c8cc] flex items-center justify-between pl-[4px] pr-[7px]">
                    <span className="text-[15px]">1</span>
                    <span className="flex flex-col gap-[4px]"><span className="rotate-180 block"><RArrow c="#333" w={6} /></span><RArrow c="#333" w={6} /></span>
                  </div>
                </div>
              </div>
            </div>
            <div className="mt-[3px]"><Sec title="连接线" /></div>
            <div className="mt-[1px] flex-1 bg-[#dde2ea] border border-[#c9cdd2] pt-[7px]">
              <div className="ml-[10px] w-[422px] h-[37px] bg-[#eeeeee] border border-[#c5c8cc] flex items-center pl-[4px] relative">
                <span className="w-[139px]">点</span>
                <div className="w-[246px] h-[27px] bg-white border border-[#c5c8cc]" />
                <span className="ml-[5px]"><DownArrow /></span>
                <span className="absolute -bottom-[5px] left-[9px] w-[8px] h-[8px] rotate-45 bg-[#dde2ea] border-r border-b border-[#c5c8cc]" />
              </div>
              <div className="flex items-start pl-[10px] mt-[8px]">
                <span className="w-[144px]">线</span>
                <div className="w-[193px] h-[25px] bg-white border border-[#c5c8cc]" />
                <span className="w-[28px] ml-[1px] h-[25px] flex items-center justify-center"><TrayDown c="#9aa0a5" /></span>
                <span className="w-[28px] h-[25px] flex items-center justify-center"><Chevrons /></span>
                <span className="w-[28px] h-[25px] flex items-center justify-center"><DownArrow c="#f8cc44" line="#a8a830" /></span>
              </div>
              <div className="ml-[152px] mt-[4px] w-[280px] h-[30px] bg-[#fbfbfb] border border-[#d0d3d6] flex items-center justify-center">自动连接线</div>
            </div>
          </div>
          <div className="w-[19px] ml-[3px] shrink-0 flex flex-col h-[715px] bg-[#d8dde4]">
            <div className="h-[20px] flex items-center justify-center"><span className="rotate-180 block"><RArrow c="#444" /></span></div>
            <div className="h-[486px] bg-[#e4e8ed] border border-[#b9bdc2] flex items-center justify-center">
              <span className="w-[8px] h-[6px] border-t border-b border-[#999] relative"><span className="absolute left-0 top-[2px] w-[8px] h-[1px] bg-[#999]" /></span>
            </div>
            <div className="flex-1" />
            <div className="h-[20px] flex items-center justify-center"><RArrow c="#444" /></div>
          </div>
        </div>
      </div>
      <div className="w-[2px] shrink-0" />
    </div>
  </div>
);

const Close = () => (
  <span className="ml-[7px] border-b border-[#e8c898] pb-[1px] inline-flex">
    <svg viewBox="0 0 14 14" width="13" height="13"><path d="M2 2 12 12M12 2 2 12" stroke="#9a8a5a" strokeWidth="2.4" /></svg>
  </span>
);

const DocTabs = () => (
  <div className="h-[27px] flex items-stretch shrink-0 bg-[#e1e5e9] border-b border-[#c0c4c8] text-[14.5px] text-[#222] relative">
    <div className="w-[168px] pl-[40px] flex items-center">测试.Z3ASM<Close /></div>
    <div className="w-[165px] pl-[30px] flex items-center">测试.Z3DRW<Close /></div>
    <div className="w-[182px] pl-[27px] flex items-center">装配001.Z3ASM<Close /></div>
    <div className="w-[222px] pl-[28px] flex items-center whitespace-nowrap">零件001.Z3 - [零件004]<Close /></div>
    <div className="w-[146px] pl-[36px] flex items-center bg-white border-x border-t border-[#c0c4c8] -mb-[1px]">喉管.Z3PRT<Close /></div>
    <span className="ml-[8px] text-[#9aa0a5] flex items-center">
      <svg viewBox="0 0 14 14" width="14" height="14"><path d="M7 1V13M1 7H13" stroke="#a5a9ad" strokeWidth="2" /></svg>
    </span>
    <span className="ml-auto mr-[7px] flex items-center">
      <svg viewBox="0 0 12 10" width="12" height="10"><path d="M0 0H12V2H0ZM0 4H12L6 10Z" fill="#9aa0a5" /></svg>
    </span>
  </div>
);

const VTool = ({ children, arrow }) => (
  <span className="flex items-center gap-[4px] shrink-0">
    <span className="w-[22px] h-[22px] flex items-center justify-center">{children}</span>
    {arrow ? <span className="w-[11px] flex justify-center"><RArrow c="#333" /></span> : null}
  </span>
);

const ViewTools = () => (
  <div className="h-[30px] flex items-center gap-[7px] pl-[367px] shrink-0">
    <VTool><Gray><path d="M9 3H18V19H9M13 11H3M7 7 3 11 7 15" strokeWidth="2" /></Gray></VTool>
    <VTool arrow><svg viewBox="0 0 22 22" width="22" height="22"><circle cx="9" cy="5" r="3" fill="#3a9ac0" /><path d="M6 8H12V12H6Z" fill="#3a9ac0" /><path d="M2 13 14 11 20 16 8 20Z" fill="#b8dc78" stroke="#3ea824" /><path d="M5 15 16 13M7 17 18 15" stroke="#3ea824" /></svg></VTool>
    <VTool><svg viewBox="0 0 20 20" width="20" height="20"><path d="M4 13 13 3 17 7 8 16Z" fill="#eee" stroke="#aaa" /><path d="M4 13 8 16 5 18 2 17Z" fill={RD} /></svg></VTool>
    <VTool><Ico s={21}><path d="M20 4 37 13 20 23 3 13Z" fill="#f9d45c" /><path d="M3 13 20 23V38L3 28Z" fill={Y} /><path d="M37 13 20 23V38L37 28Z" fill={L} /><path d="M20 0V14" stroke="#3ea824" strokeWidth="2" /></Ico></VTool>
    <VTool arrow><Ico s={22}>{cube}</Ico></VTool>
    <VTool arrow><Ico s={22}><path d="M20 4 37 13 20 23 3 13ZM3 13 20 23V38L3 28ZM37 13 20 23V38L37 28Z" fill="#fff" stroke="#8fb0c0" strokeWidth="1.5" /></Ico></VTool>
    <VTool arrow><svg viewBox="0 0 22 22" width="22" height="22"><path d="M11 1 20 6 21 14 14 21 5 20 1 12 4 4Z" fill={Y} stroke={RD} /><path d="M11 11 11 1M11 11 20 6M11 11 21 14M11 11 14 21M11 11 5 20M11 11 1 12M11 11 4 4" stroke={RD} /></svg></VTool>
    <VTool arrow><svg viewBox="0 0 22 22" width="22" height="22"><rect x="1" y="1" width="20" height="20" fill="#bcd8ea" stroke="#3f8cb8" strokeWidth="2" /><ellipse cx="11" cy="11" rx="5" ry="7" fill={Y} stroke="#8a6a10" strokeWidth="1.5" /></svg></VTool>
    <VTool><svg viewBox="0 0 22 22" width="22" height="22"><rect x="2" y="1" width="18" height="20" fill="#fff" stroke="#b9c7d3" /><path d="M6 5H15V13" stroke="#3f8cb8" strokeDasharray="2 2" fill="none" /><rect x="6" y="14" width="6" height="5" fill="#3f8cb8" /></svg></VTool>
    <VTool arrow><svg viewBox="0 0 22 22" width="22" height="22"><path d="M3 2V20M19 2V20" stroke="#5aa0c0" strokeWidth="2" /><path d="M4 7H18" stroke="#5aa0c0" strokeWidth="1.5" /><path d="M3 19H19" stroke={RD} strokeWidth="2.5" /></svg></VTool>
    <VTool arrow><svg viewBox="0 0 22 22" width="22" height="22"><rect x="1" y="2" width="20" height="16" fill="#6e7f94" stroke="#555" /><rect x="4" y="4" width="14" height="7" fill="#b7c2d0" /><ellipse cx="11" cy="20" rx="7" ry="2" fill="#777" /></svg></VTool>
    <VTool><span className="w-[20px] h-[11px] bg-black border border-[#d8dadc]" /></VTool>
    <VTool><span className="w-[21px] h-[22px] bg-[#00ff00] border-2 border-[#7b2b96]" /></VTool>
    <VTool arrow><svg viewBox="0 0 22 22" width="22" height="22"><path d="M1 8 11 2 21 8 11 14Z" fill="#7fd0e4" /><path d="M1 11 11 17 21 11M1 14 11 20 21 14" stroke="#3a9ab0" strokeWidth="2" fill="none" /></svg></VTool>
    <div className="w-[143px] h-[26px] ml-[-1px] bg-[#eceef0] border border-[#dcdfe2] flex items-center pl-[10px] text-[14.5px] text-[#9b9b9b]">
      <svg viewBox="0 0 14 16" width="12" height="14"><path d="M4 11C1 6 3 1 7 1S13 6 10 11V13H4Z" fill="none" stroke="#c2c2c2" strokeWidth="1.4" /></svg>
      <span className="w-[13px] h-[13px] ml-[5px] rounded-full border border-[#b0b0b0] bg-[#d8d8d8]" />
      <span className="ml-[9px]">图层0000</span>
      <span className="ml-auto mr-[9px]"><RArrow c="#c0c0c0" /></span>
    </div>
  </div>
);

const txt = (x, y, t, c) => (
  <g transform={`translate(${x} ${y}) scale(1.96 3)`} key={t + x + y}>
    <text x="0" y="0" fontSize="20" fill={c} textAnchor="middle" fontFamily="Liberation Sans, sans-serif">{t}</text>
  </g>
);

// model drawn in the coordinates of a 1568 x 1290 box squeezed on 800 x 430
const Model = () => {
  const ln = { vectorEffect: 'non-scaling-stroke', fill: 'none' };
  const top = 'M370 62 1180 93C1360 110 1490 300 1490 500 1490 680 1380 830 1190 852L390 820C200 800 72 620 72 420 72 230 180 70 370 62Z';
  return (
    <svg viewBox="0 0 1568 1290" preserveAspectRatio="none" className="absolute left-[139px] top-[140px] w-[800px] h-[430px]">
      <defs>
        <linearGradient id="bodyG" x1="0" x2="1" y1="0" y2="0">
          <stop offset="0" stopColor="#3acb42" />
          <stop offset=".75" stopColor="#3ed046" />
          <stop offset=".95" stopColor="#2e9436" />
        </linearGradient>
        <linearGradient id="gold" x1="0" x2="0" y1="0" y2="1">
          <stop offset="0" stopColor="#b47810" />
          <stop offset=".4" stopColor="#ffd478" />
          <stop offset="1" stopColor="#8a5808" />
        </linearGradient>
        <linearGradient id="olive" x1="0" x2="0" y1="0" y2="1">
          <stop offset="0" stopColor="#7c9c1c" />
          <stop offset=".4" stopColor="#c8dc50" />
          <stop offset="1" stopColor="#708c14" />
        </linearGradient>
      </defs>
      <path d={top} fill="url(#bodyG)" />
      <path d="M72 420 47 660C50 860 170 1040 360 1070L1170 1102C1330 1092 1455 900 1462 700L1490 500 1190 852 390 820Z" fill="url(#bodyG)" />
      <path d="M270 1050C330 1140 420 1205 517 1210L985 1228C1080 1225 1170 1170 1215 1100L1170 1102 360 1070Z" fill="#40d048" />
      <path d="M495 320 1000 345C1160 370 1280 560 1280 760 1280 960 1150 1100 1000 1095L530 1075C340 1060 205 950 203 790 205 540 340 320 495 320Z" fill="#00c400" fillOpacity=".22" />
      <path d="M500 360 880 352C1040 380 1148 560 1148 720 1148 860 1060 1000 880 1040L650 1035C480 1020 355 870 355 680 355 530 420 390 500 360Z" fill="#00c000" fillOpacity=".18" />
      <path d={top} fill="#46dc4e" fillOpacity=".72" />
      <path d="M620 402 852 410C1010 425 1145 590 1145 720L1140 760 360 700C360 530 470 402 620 402Z" fill="#00cc00" fillOpacity=".35" />
      <path d="M490 475 950 490C1060 500 1145 620 1145 740 1130 800 1100 830 1050 845L390 820C370 770 360 730 360 680 360 560 430 470 490 475Z" fill="#4ce454" fillOpacity=".55" />
      <path style={ln} d="M370 62 1180 93C1360 110 1490 300 1490 500M72 420C72 230 180 70 370 62" stroke="#00f000" strokeWidth="1.5" />
      <path style={ln} d="M72 420C72 620 200 800 390 820L1190 852C1380 830 1490 680 1490 500" stroke="#0a3c0a" strokeOpacity=".75" strokeWidth="1" />
      <g stroke="#0a3c0a" strokeOpacity=".6" strokeWidth="1">
        <path style={ln} d="M362 70 338 312M1172 95 1148 345M338 312 510 322M975 338 1148 345M72 460C100 370 210 315 338 312M1148 345C1300 360 1430 500 1462 640" />
        <path style={ln} d="M975 338 962 470M500 380 495 452M623 360 618 402M858 360 852 410M388 820 362 1070M1195 852 1170 1102M532 1076 517 1210M1000 1095 985 1228M648 1035 640 1092M880 1042 875 1100" />
        <path style={ln} d="M362 1070 530 1076M1000 1095 1170 1102M524 1165 990 1183M217 700C215 900 340 1130 524 1165M990 1183C1130 1180 1280 1000 1285 760 1285 600 1200 430 1040 365" />
        <path style={ln} d="M203 800C205 950 340 1060 530 1076M470 320C340 320 220 480 217 680M1000 1095C1150 1090 1285 950 1288 740" />
        <path style={ln} d="M490 475 950 490C1060 500 1145 620 1145 740 1145 900 1020 1040 880 1040L650 1035C490 1020 360 880 360 680 360 560 430 470 490 475Z" />
        <path style={ln} d="M495 452 965 470C1130 480 1230 640 1230 780 1230 950 1090 1100 880 1100L640 1092C420 1080 252 950 250 780 250 600 350 460 495 452Z" />
        <path style={ln} d="M355 680C360 530 470 402 620 402L852 410C1010 420 1145 590 1145 720M355 680C360 880 500 1085 640 1092" />
        <path style={ln} d="M47 660 72 420M1462 700 1490 500" />
      </g>
      <path d="M47 660C50 860 170 1040 360 1070L532 1076M270 1050C330 1140 420 1205 517 1210L985 1228C1080 1225 1170 1170 1215 1100M1170 1102C1330 1092 1455 900 1462 700" style={ln} stroke="#0a3c0a" strokeOpacity=".7" strokeWidth="1" />
      <g stroke="#00f000" strokeWidth="1.4">
        <path style={ln} d="M460 205 800 215C1050 240 1305 430 1308 640 1300 780 1200 950 1050 945L720 935C500 920 230 700 230 500 230 340 340 210 460 205Z" />
        <path style={ln} d="M370 70 615 335M890 1040 1190 855M500 370C600 345 700 345 880 352 1040 380 1148 560 1148 720 1140 860 1080 940 1020 945M360 640C370 520 420 420 500 370" />
      </g>
      <g stroke="#b85818" strokeOpacity=".9" strokeWidth="1">
        <path style={ln} d="M708 355 850 358 855 535 712 530Z" />
      </g>
      <g stroke="#a88a1c" strokeWidth="1">
        <path style={ln} d="M680 605 822 607 827 783 685 780ZM675 662 815 665 820 840 680 838ZM665 830V890L740 892" />
        <path style={ln} d="M665 690H755M660 748H740" />
      </g>
      <path style={ln} d="M692 442 780 445" stroke="#e01010" strokeWidth="1.2" />
      <path style={ln} d="M778 440V340M750 610V590" stroke="#44ee44" strokeWidth="1" />
      <path style={ln} d="M602 825H740" stroke="#8aa820" strokeWidth="2" />
      <path style={ln} d="M738 740V830" stroke="#1f8a9a" strokeWidth="4" />
      <path d="M738 722 750 760H726Z" fill="#1f8a9a" />
      <path style={ln} d="M735 835V890" stroke="#6e4a10" strokeWidth="4" />
      <ellipse cx="735" cy="882" rx="10" ry="12" fill="#8a5a10" />
      <path d="M730 920 740 932 730 950 722 932Z" fill="#7c8c10" />
      <path d="M190 58 245 28 245 45 365 45C380 55 380 70 365 80L245 75 245 88Z" fill="url(#gold)" />
      <path style={ln} d="M365 45C380 55 380 70 365 80" stroke="#e01010" strokeWidth="1.2" />
      <path d="M452 338 510 308 510 325 628 328C642 338 642 352 628 360L510 355 510 370Z" fill="url(#olive)" />
      <path style={ln} d="M628 328C642 338 642 352 628 360" stroke="#b85818" strokeWidth="1.2" />
      {txt(677, 465, 'X', '#e01818')}
      {txt(775, 335, 'Y', '#52ee52')}
      {txt(750, 585, 'Y', '#70c020')}
      {txt(735, 660, 'Z', '#a88a1c')}
      {txt(652, 712, 'X', '#b86a18')}
      {txt(647, 770, 'X', '#b86a18')}
      {txt(585, 845, 'Y', '#8a9c14')}
      {txt(725, 990, 'X', '#8a8a14')}
    </svg>
  );
};

const Triad = () => (
  <svg viewBox="0 0 70 100" className="absolute left-[0px] top-[640px] w-[70px] h-[100px] overflow-visible">
    <path d="M53 56V31" stroke="#0a0ae8" strokeWidth="5" />
    <path d="M53 21 59 36H47Z" fill="#0a0ae8" />
    <text x="53" y="21" fontSize="20" textAnchor="middle" fill="#1818f0" fontFamily="Liberation Sans, sans-serif">Z</text>
    <path d="M53 55H18" stroke="#18e018" strokeWidth="4" />
    <path d="M10 55 24 50V60Z" fill="#40f040" />
    <text x="5" y="62" fontSize="20" textAnchor="middle" fill="#10e810" fontFamily="Liberation Sans, sans-serif">Y</text>
    <path d="M53 57 50 76" stroke="#9a0c0c" strokeWidth="5" />
    <circle cx="50" cy="74" r="4" fill="none" stroke="#f01010" strokeWidth="2" />
    <text x="48" y="94" fontSize="20" textAnchor="middle" fill="#f01010" fontFamily="Liberation Sans, sans-serif">X</text>
  </svg>
);

const Viewport = () => (
  <div className="flex-1 min-w-0 flex flex-col">
    <DocTabs />
    <div className="flex-1 min-h-0 relative border border-white bg-linear-to-b from-[#fafafa] to-[#9e9e9e]">
      <ViewTools />
      <Model />
      <Triad />
      <span className="absolute left-[4px] bottom-[0px] text-[21.5px] leading-[28px] text-[#111]">69.0681 mm</span>
    </div>
  </div>
);

const StatusBar = () => (
  <div className="h-[36px] shrink-0 flex items-center bg-[#e1e5e9] text-[14px] text-[#444]">
    <span className="ml-[7px] w-[1351px] whitespace-nowrap">选择放样轮廓。<span className="ml-[16px]">&lt;单击中键&gt;结束.</span></span>
    <span className="w-[1px] h-[30px] bg-[#9a9da0]" />
    <span className="ml-[17px] w-[25px] h-[25px] bg-[#ffe27a] border border-[#c9932c] flex items-center justify-center">
      <svg viewBox="0 0 20 20" width="19" height="19"><rect x="1" y="1" width="18" height="18" fill="#6f8fc8" /><rect x="7" y="5" width="11" height="13" fill="#fff" /><path d="M12 7V17" stroke={RD} strokeWidth="3" /><path d="M9 7H15" stroke="#444" strokeWidth="2" /></svg>
    </span>
    <span className="ml-[9px] w-[22px] flex justify-center">
      <svg viewBox="0 0 20 20" width="20" height="20"><rect x="1" y="2" width="18" height="13" fill="#3cb4cc" stroke="#999" /><rect x="6" y="15" width="8" height="3" fill="#555" /></svg>
    </span>
    <span className="ml-[14px] w-[22px] flex justify-center">
      <svg viewBox="0 0 20 20" width="19" height="19"><rect x="1" y="1" width="18" height="18" fill="#d8dfe8" stroke="#6f8fc8" strokeWidth="1.5" /><rect x="1" y="1" width="18" height="4" fill="#6f8fc8" /><path d="M4 9H16M4 12H16M4 15H12" stroke="#888" /></svg>
    </span>
    <div className="ml-[12px] w-[437px] h-[28px] bg-white border border-[#c5c8cc]" />
  </div>
);

const Frame = ({ c }) => <div className={`absolute border-[3px] border-[#ff8000] ${c}`} />;
const Badge = ({ c, n }) => (
  <div className={`absolute w-[40px] h-[40px] rounded-full bg-[#4f7cc9] text-white text-[27px] flex items-center justify-center shadow-[1px_2px_3px_rgba(0,0,0,0.35)] font-['Liberation_Sans',sans-serif] ${c}`}>{n}</div>
);

export default function App() {
  return (
    <div className="w-[1920px] h-[1030px] overflow-hidden relative flex flex-col bg-[#e1e5e9] text-[#333] font-['Open_Sans','Noto_Sans_CJK_SC',sans-serif]">
      <div className="h-[32px] shrink-0 flex items-center text-[14.5px] text-[#222]">
        <QuickIcons />
        <div className="flex gap-[19.6px] ml-[15px] whitespace-nowrap">
          {menus.map((m) => <span key={m}>{m}</span>)}
        </div>
        <span className="ml-[294px] text-[#444] whitespace-nowrap">中望3D 2022X SP x64 - [喉管.Z3PRT]</span>
        <div className="ml-auto flex items-center gap-[15px] pr-[10px]">
          <Win k="min" /><Win k="max" /><Win k="x" />
        </div>
      </div>
      <div className="h-[27px] shrink-0 flex items-end text-[14.5px] text-[#333] relative z-10">
        <div className="ml-[1px] w-[89px] h-[26px] bg-[#2a5fb6] border border-[#1c4a94] text-white flex items-center justify-center">文件(F)</div>
        <div className="ml-[5px] w-[51px] h-[27px] bg-[#fbfbfb] border border-b-0 border-[#c0c4c8] flex items-center justify-center -mb-[1px]">造型</div>
        <div className="ml-[15px] h-[26px] flex items-center gap-[25px] whitespace-nowrap">
          {tabs.map((t, i) => <span key={t + i}>{t}</span>)}
        </div>
        <div className="ml-auto h-[27px] flex items-center pr-[4px]">
          <svg viewBox="0 0 14 10" width="14" height="10"><path d="M1 6 7 1 13 6M3 9 7 5 11 9" fill="none" stroke="#555" strokeWidth="1.6" /></svg>
          <div className="ml-[13px] w-[180px] h-[25px] bg-white border border-[#c5c8cc] flex items-center justify-between pl-[1px] pr-[7px] text-[#999]">
            <span>查找命令</span>
            <svg viewBox="0 0 16 16" width="14" height="14"><circle cx="7" cy="7" r="5.5" fill="none" stroke="#b0b4b8" /><path d="M11 11 15 15" stroke="#5aa8c8" strokeWidth="2" /></svg>
          </div>
          <span className="ml-[9px] w-[22px] flex justify-center">
            <svg viewBox="0 0 20 20" width="21" height="21"><circle cx="10" cy="10" r="6.5" fill="none" stroke="#b8bcc0" strokeWidth="3" /><circle cx="10" cy="10" r="9" fill="none" stroke="#b8bcc0" strokeWidth="2" strokeDasharray="3 4" /></svg>
          </span>
          <span className="ml-[10px] w-[22px] flex justify-center">
            <svg viewBox="0 0 22 22" width="22" height="22"><circle cx="11" cy="11" r="10" fill="#1a55b8" stroke="#b7c6dc" /><text x="11" y="17" fontSize="16" fontWeight="700" textAnchor="middle" fill="#fff" fontFamily="Liberation Sans, sans-serif">?</text></svg>
          </span>
          <span className="ml-[5px] w-[10px]"><RArrow /></span>
          <span className="ml-[8px]"><Win k="min" c="#222" /></span>
          <span className="ml-[6px]"><Win k="max" c="#222" /></span>
          <span className="ml-[6px]"><Win k="x" c="#222" /></span>
        </div>
      </div>
      <div className="h-[119px] shrink-0 bg-[#fbfbfb] border-t border-b border-[#c0c4c8] flex pt-[1px] text-[14.5px] text-[#333]">
        <RibbonGroup w="w-[335px]" pl="pl-[8px]" title="基础造型" items={items1} />
        <RibbonGroup w="w-[365px]" pl="pl-[3px]" title="工程特征" items={items2} />
        <RibbonGroup w="w-[509px]" pl="pl-[4px]" title="编辑模型" items={items3} capCls="pr-[24px] relative" />
        <RibbonGroup w="w-[404px]" pl="pl-[6px]" title="变形" items={items4} />
        <RibbonGroup w="w-[196px]" pl="" title="基础编辑"><Rows /></RibbonGroup>
        <RibbonGroup w="w-[103px]" pl="pl-[8px]" title="基准面">
          <div className="flex h-[29px] items-center gap-[5px]">
            <Mini kind="datum" />
            <span className="whitespace-nowrap">基准面</span>
            <span className="ml-[4px]"><RArrow /></span>
          </div>
        </RibbonGroup>
      </div>
      <Toolbar />
      <div className="flex-1 min-h-0 flex">
        <LeftPanel />
        <Viewport />
      </div>
      <StatusBar />

      <Frame c="left-[275px] top-[61px] w-[61px] h-[76px]" />
      <Frame c="left-[180px] top-[291px] w-[63px] h-[49px]" />
      <Frame c="left-[176px] top-[348px] w-[270px] h-[181px]" />
      <Frame c="left-[252px] top-[560px] w-[70px] h-[73px]" />
      <Badge c="left-[320px] top-[153px]" n="1" />
      <Badge c="left-[253px] top-[295px]" n="2" />
      <Badge c="left-[458px] top-[405px]" n="3" />
      <Badge c="left-[319px] top-[634px]" n="4" />
    </div>
  );
}
